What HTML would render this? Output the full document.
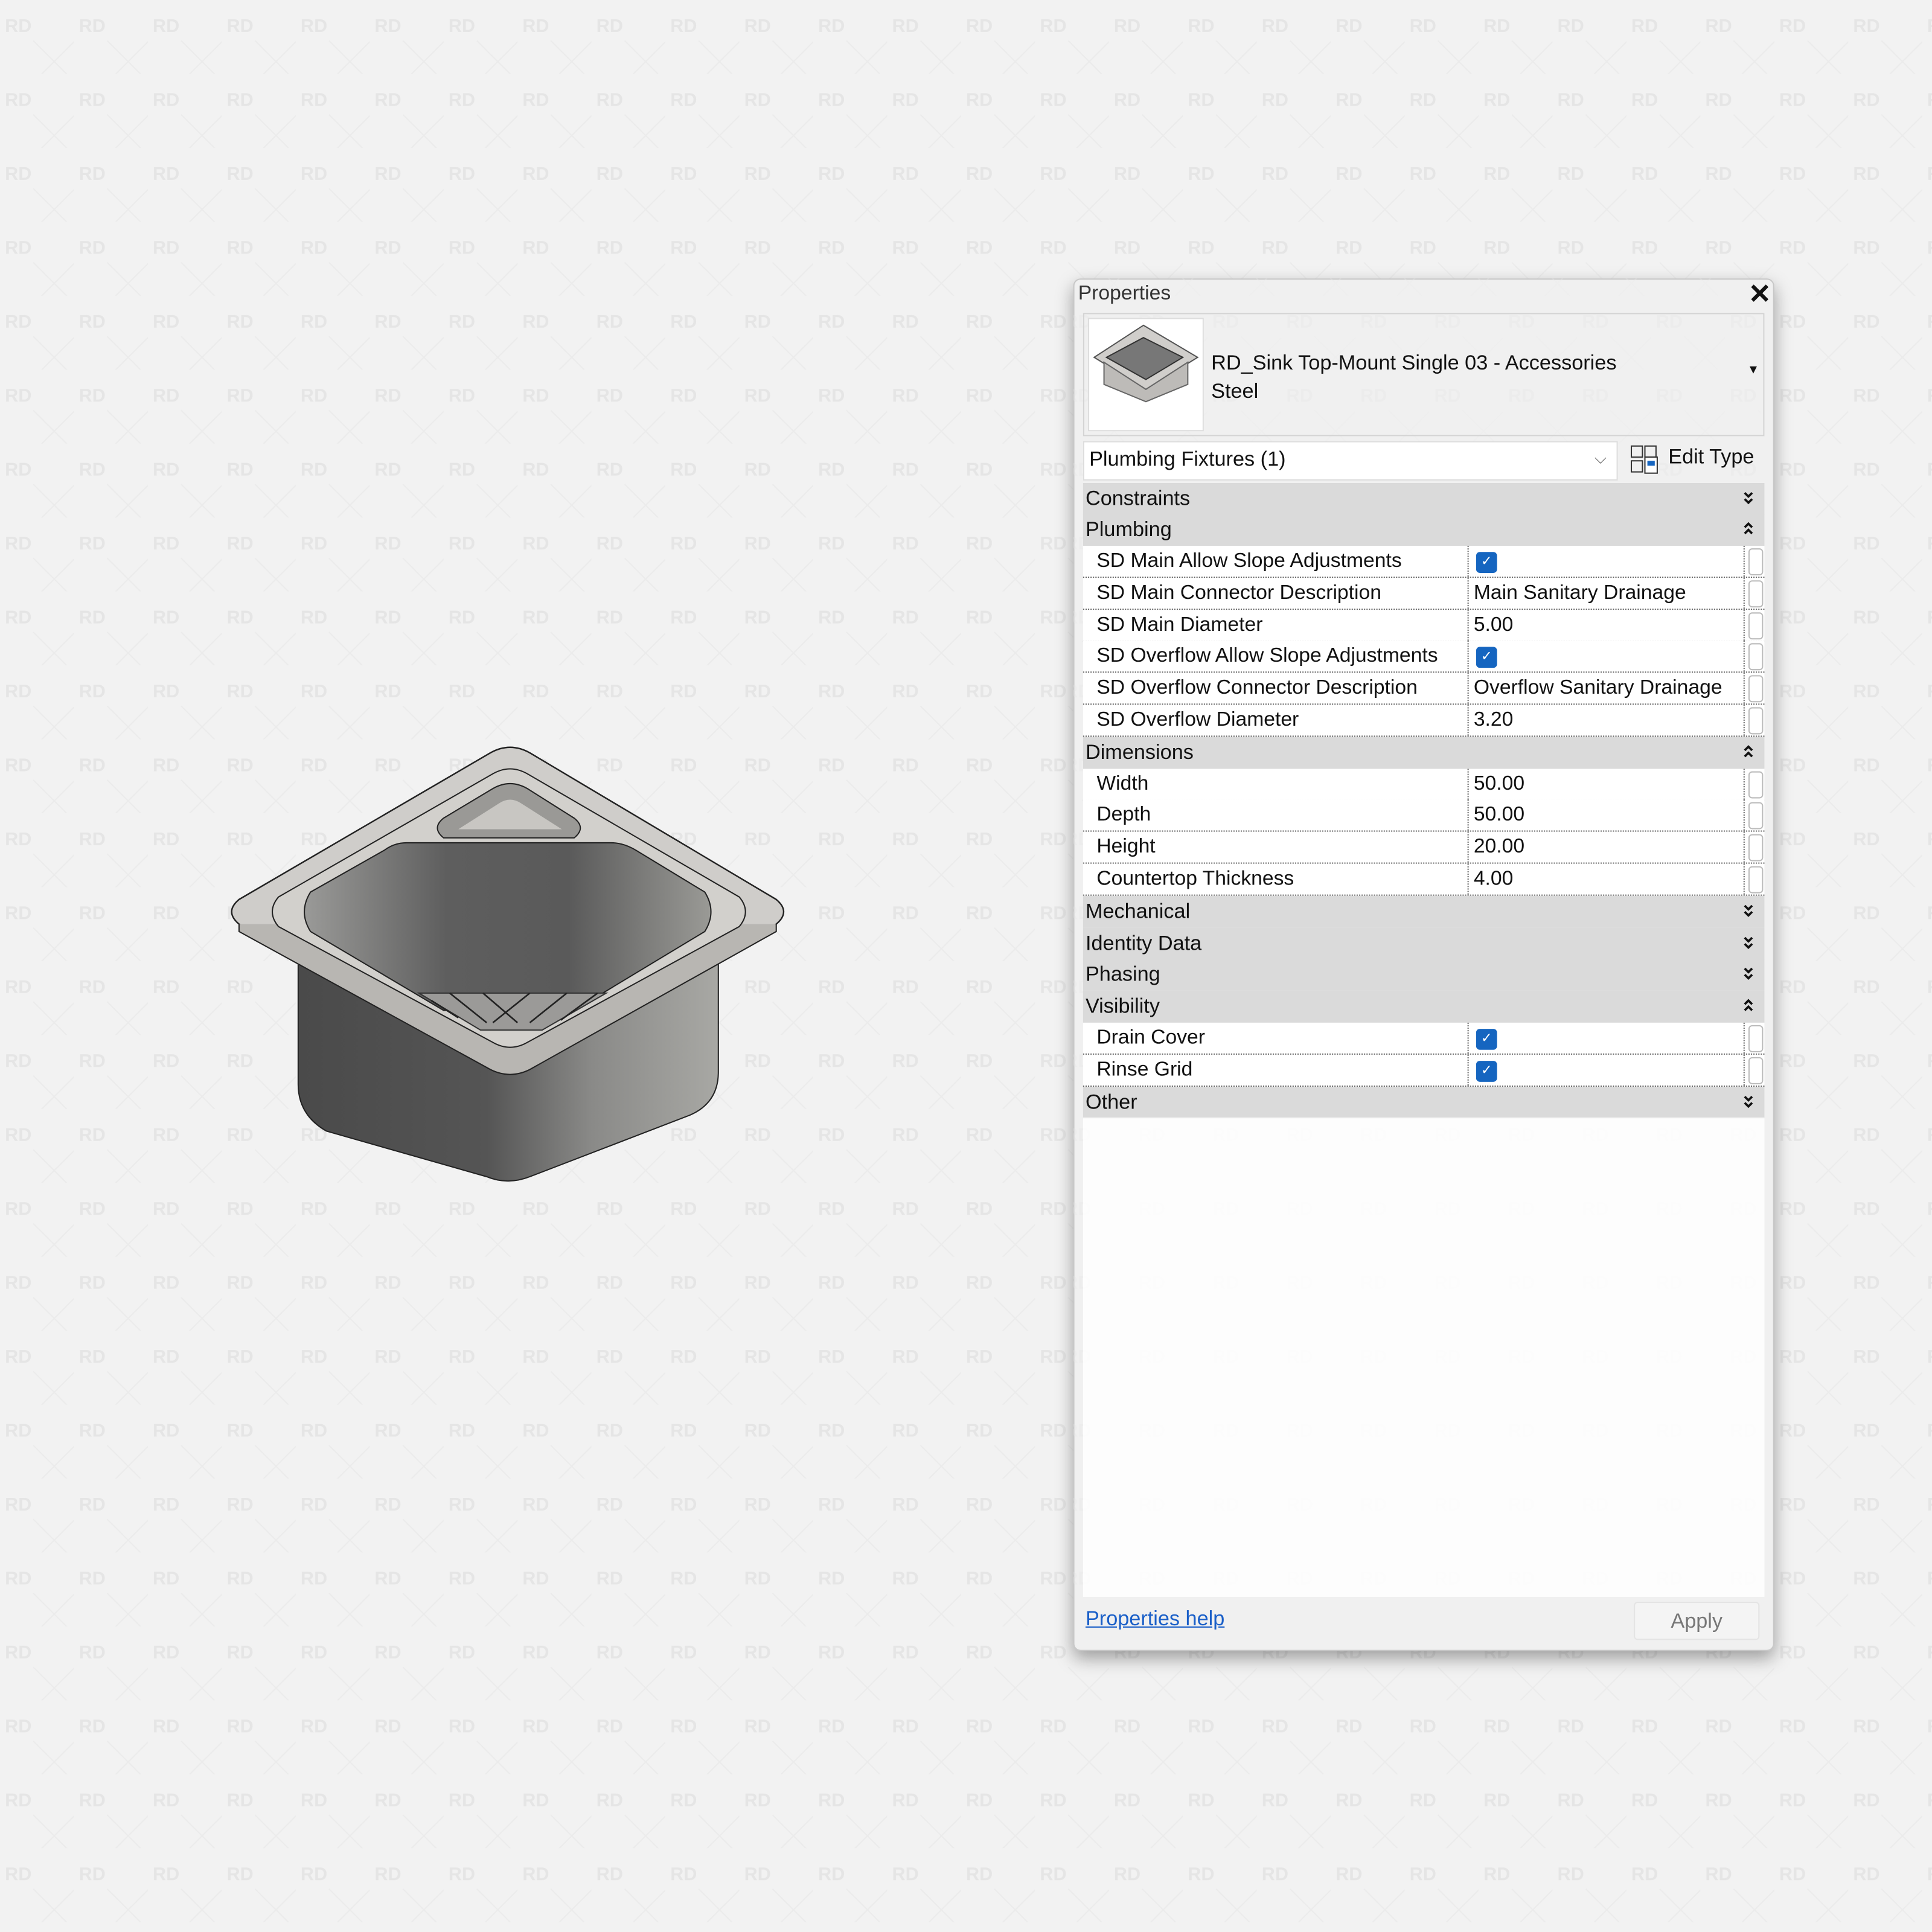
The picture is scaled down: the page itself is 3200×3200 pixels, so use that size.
<!DOCTYPE html>
<html><head><meta charset="utf-8"><style>
*{margin:0;padding:0;box-sizing:border-box}
html,body{width:3200px;height:3200px;overflow:hidden;background:#f2f2f2}
#s{position:absolute;left:0;top:0;width:1568px;height:1568px;transform:scale(2.040816);transform-origin:0 0;font-family:"Liberation Sans",sans-serif;font-size:16.5px;color:#111}
.a{position:absolute}
.panel{left:871px;top:226px;width:569px;height:1114px;background:#f0f0f0;border:1px solid #c8c8c8;border-radius:6px;box-shadow:0 6px 14px rgba(0,0,0,.35)}
.r{position:absolute;left:879px;width:553px;height:26px;line-height:25px}
.h{background:#dadada;padding-left:2px;font-size:16.8px}
.p{background:#fff;border-bottom:1px dotted #666}
.p .l{position:absolute;left:11px}
.p .v{position:absolute;left:312px;top:0;height:25px;border-left:1px dotted #666;padding-left:4px;width:224px}
.p .sc{position:absolute;left:536px;top:0;width:17px;height:25px;border-left:1px dotted #666}
.p .sc:after{content:"";position:absolute;left:3px;top:2px;width:10px;height:20px;border:1px solid #bbb;border-radius:3px}
.cb{position:absolute;left:6px;top:5px;width:17px;height:17px;background:#1565c0;border-radius:3px;color:#fff;font-size:11px;line-height:17px;text-align:center}
.ch{position:absolute;right:8px;top:6px}
</style></head><body><div id="s">
<svg width="0" height="0" style="position:absolute"><defs>
<symbol id="dn" viewBox="0 0 10 14"><path d="M2 2 L5 5 L8 2 M2 7 L5 10 L8 7" fill="none" stroke="#111" stroke-width="1.8"/></symbol>
<symbol id="up" viewBox="0 0 10 14"><path d="M2 5 L5 2 L8 5 M2 10 L5 7 L8 10" fill="none" stroke="#111" stroke-width="1.8"/></symbol>
</defs></svg>
<svg class="a" style="left:0;top:0" width="1568" height="1568"><defs><pattern id="w" width="60" height="60" patternUnits="userSpaceOnUse" x="0" y="0"><text x="4" y="26" font-family="Liberation Sans" font-weight="bold" font-size="15" fill="#e5e5e5">RD</text><path d="M27 33 L61 67 M61 33 L27 67" stroke="#ebebeb" stroke-width="1"/></pattern></defs><rect width="1568" height="1568" fill="url(#w)"/></svg>

<svg class="a" style="left:0;top:0" width="1568" height="1568">
<defs>
<linearGradient id="bd" x1="0" x2="1"><stop offset="0" stop-color="#4a4a4a"/><stop offset=".45" stop-color="#555"/><stop offset=".7" stop-color="#8a8a88"/><stop offset="1" stop-color="#a8a8a4"/></linearGradient>
<linearGradient id="bs" x1="0" x2="1"><stop offset="0" stop-color="#9a9a98"/><stop offset=".35" stop-color="#5e5e5e"/><stop offset=".65" stop-color="#5a5a5a"/><stop offset="1" stop-color="#9a9a96"/></linearGradient>
</defs>
<path d="M242 775 L242 880 Q242 905 265 918 L395 955 Q412 962 430 955 L560 905 Q583 895 583 870 L583 775 Z" fill="url(#bd)" stroke="#222" stroke-width="1"/>
<path d="M398 611 Q414 602 430 611 L630 730 Q642 740 630 750 L430 862 Q414 870 398 862 L194 750 Q182 740 194 730 Z" fill="#cfcdca" stroke="#222" stroke-width="1.2"/>
<path d="M194 750 L194 756 L398 868 Q414 876 430 868 L630 756 L630 750" fill="#b8b6b2" stroke="#222" stroke-width="1"/>
<path d="M400 628 Q414 620 428 628 L600 728 Q610 740 600 752 L428 846 Q414 854 400 846 L226 752 Q216 740 226 728 Z" fill="#d2d0cc" stroke="#222" stroke-width="1"/>
<path d="M360 680 Q350 672 360 664 L400 640 Q414 632 428 640 L466 664 Q476 672 466 680 Z" fill="#9a9996" stroke="#222" stroke-width="1"/>
<path d="M372 673 L405 652 Q414 646 423 652 L456 673 Z" fill="#c8c6c2"/>
<path d="M330 684 L496 684 Q506 684 516 690 L572 724 Q582 740 572 756 L466 820 L360 820 L252 756 Q242 740 252 724 L312 690 Q320 684 330 684 Z" fill="url(#bs)" stroke="#222" stroke-width="1"/>
<path d="M340 806 L492 806 L440 836 L390 836 Z" fill="#9b9a98" stroke="#333" stroke-width="1"/>
<path d="M350 812 L372 826 M365 806 L395 830 M392 806 L420 830 M430 806 L400 830 M460 806 L430 830 M485 806 L455 828" stroke="#222" stroke-width="1.3"/>
</svg>

<div class="a panel"></div>
<svg class="a" style="left:871px;top:226px;opacity:.35" width="569" height="1114"><rect width="569" height="1114" fill="url(#w)" transform="translate(-11,-46)"/></svg>
<div class="a" style="left:875px;top:229px;font-size:16.5px;color:#333">Properties</div>
<div class="a" style="left:1419px;top:226px;font-size:22px;font-weight:bold">✕</div>
<div class="a" style="left:879px;top:254px;width:553px;height:100px;border:1px solid #d4d4d4"></div>
<div class="a" style="left:883px;top:258px;width:94px;height:92px;background:#fff;border:1px solid #ddd"></div>
<svg class="a" style="left:884px;top:260px" width="92" height="70"><path d="M44 4 L88 30 L46 56 L4 30 Z" fill="#d0cecb" stroke="#555"/><path d="M44 14 L76 30 L46 48 L14 30 Z" fill="#777" stroke="#333"/><path d="M12 34 L12 52 L46 66 L80 52 L80 34 L46 56 Z" fill="#bdbbb8" stroke="#666"/></svg>
<div class="a" style="left:983px;top:283px;line-height:23px;font-size:16.8px">RD_Sink Top-Mount Single 03 - Accessories<br>Steel</div>
<div class="a" style="left:1418px;top:295px;font-size:10px">▼</div>
<div class="a" style="left:879px;top:358px;width:434px;height:32px;background:#fff;border:1px solid #ddd"></div>
<div class="a" style="left:884px;top:363px;font-size:16.8px">Plumbing Fixtures (1)</div>
<div class="a" style="left:1294px;top:364px;font-size:13px;color:#666">⌵</div>
<svg class="a" style="left:1323px;top:361px" width="24" height="24"><rect x="1" y="1" width="9" height="9" fill="none" stroke="#333"/><rect x="1" y="13" width="9" height="9" fill="none" stroke="#333"/><rect x="12" y="1" width="9" height="9" fill="none" stroke="#333"/><rect x="12" y="10" width="10" height="13" fill="#fff" stroke="#333"/><rect x="14" y="13" width="6" height="4" fill="#1565c0"/></svg>
<div class="a" style="left:1354px;top:361px;font-size:16.8px">Edit Type</div>

<div class="r h" style="top:392px">Constraints<svg class="ch" width="10" height="14"><use href="#dn"/></svg></div>
<div class="r h" style="top:417px">Plumbing<svg class="ch" width="10" height="14"><use href="#up"/></svg></div>
<div class="r p" style="top:443px"><span class="l">SD Main Allow Slope Adjustments</span><span class="v"><span class="cb">✓</span></span><span class="sc"></span></div>
<div class="r p" style="top:468.8px"><span class="l">SD Main Connector Description</span><span class="v">Main Sanitary Drainage</span><span class="sc"></span></div>
<div class="r p" style="top:494.6px"><span class="l">SD Main Diameter</span><span class="v">5.00</span><span class="sc"></span></div>
<div class="r p" style="top:520.4px"><span class="l">SD Overflow Allow Slope Adjustments</span><span class="v"><span class="cb">✓</span></span><span class="sc"></span></div>
<div class="r p" style="top:546.2px"><span class="l">SD Overflow Connector Description</span><span class="v">Overflow Sanitary Drainage</span><span class="sc"></span></div>
<div class="r p" style="top:572px"><span class="l">SD Overflow Diameter</span><span class="v">3.20</span><span class="sc"></span></div>
<div class="r h" style="top:597.8px">Dimensions<svg class="ch" width="10" height="14"><use href="#up"/></svg></div>
<div class="r p" style="top:623.6px"><span class="l">Width</span><span class="v">50.00</span><span class="sc"></span></div>
<div class="r p" style="top:649.4px"><span class="l">Depth</span><span class="v">50.00</span><span class="sc"></span></div>
<div class="r p" style="top:675.2px"><span class="l">Height</span><span class="v">20.00</span><span class="sc"></span></div>
<div class="r p" style="top:701px"><span class="l">Countertop Thickness</span><span class="v">4.00</span><span class="sc"></span></div>
<div class="r h" style="top:726.8px">Mechanical<svg class="ch" width="10" height="14"><use href="#dn"/></svg></div>
<div class="r h" style="top:752.6px">Identity Data<svg class="ch" width="10" height="14"><use href="#dn"/></svg></div>
<div class="r h" style="top:778.4px">Phasing<svg class="ch" width="10" height="14"><use href="#dn"/></svg></div>
<div class="r h" style="top:804.2px">Visibility<svg class="ch" width="10" height="14"><use href="#up"/></svg></div>
<div class="r p" style="top:830px"><span class="l">Drain Cover</span><span class="v"><span class="cb">✓</span></span><span class="sc"></span></div>
<div class="r p" style="top:855.8px"><span class="l">Rinse Grid</span><span class="v"><span class="cb">✓</span></span><span class="sc"></span></div>
<div class="r h" style="top:881.6px">Other<svg class="ch" width="10" height="14"><use href="#dn"/></svg></div>
<div class="a" style="left:879px;top:907px;width:553px;height:389px;background:#fff;opacity:.85"></div>
<div class="a" style="left:881px;top:1304px;color:#1a5fc8;text-decoration:underline;font-size:16.8px">Properties help</div>
<div class="a" style="left:1326px;top:1300px;width:102px;height:31px;background:#f4f4f4;border:1px solid #e4e4e4;border-radius:3px;color:#777;text-align:center;line-height:30px;font-size:16.8px">Apply</div>
</div></body></html>
